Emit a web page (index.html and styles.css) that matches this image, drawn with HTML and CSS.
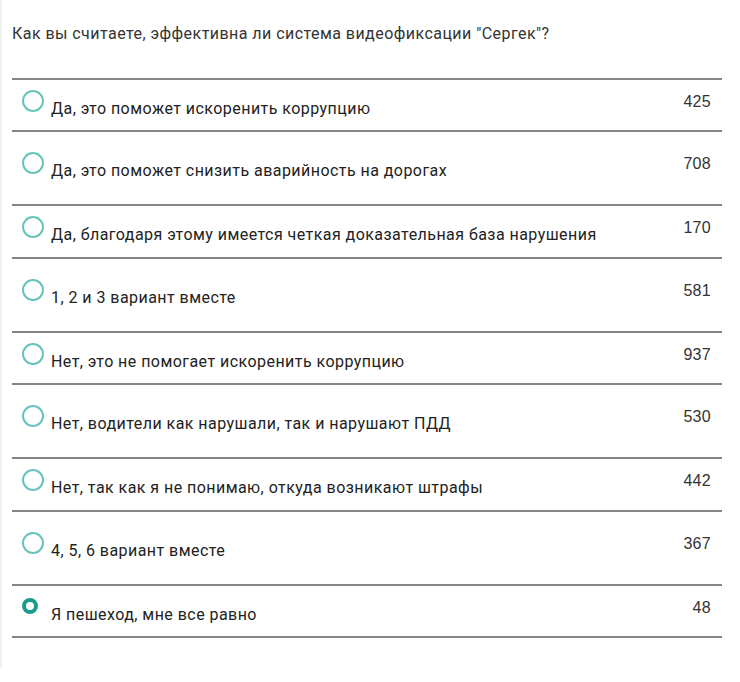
FILE: index.html
```html
<!DOCTYPE html>
<html lang="ru">
<head>
    <meta charset="UTF-8">
    <meta name="viewport" content="width=device-width, initial-scale=1.0">
    <title>Опрос</title>
    <link rel="stylesheet" href="styles.css">
</head>
<body>
    <div class="poll">
        <p class="poll-title">Как вы считаете, эффективна ли система видеофиксации "Сергек"?</p>
        <div class="poll-options">
            <div class="option">
                <span class="radio"></span>
                <span class="option-text">Да, это поможет искоренить коррупцию</span>
                <span class="count">425</span>
            </div>
            <div class="option">
                <span class="radio"></span>
                <span class="option-text">Да, это поможет снизить аварийность на дорогах</span>
                <span class="count">708</span>
            </div>
            <div class="option">
                <span class="radio"></span>
                <span class="option-text">Да, благодаря этому имеется четкая доказательная база нарушения</span>
                <span class="count">170</span>
            </div>
            <div class="option">
                <span class="radio"></span>
                <span class="option-text">1, 2 и 3 вариант вместе</span>
                <span class="count">581</span>
            </div>
            <div class="option">
                <span class="radio"></span>
                <span class="option-text">Нет, это не помогает искоренить коррупцию</span>
                <span class="count">937</span>
            </div>
            <div class="option">
                <span class="radio"></span>
                <span class="option-text">Нет, водители как нарушали, так и нарушают ПДД</span>
                <span class="count">530</span>
            </div>
            <div class="option">
                <span class="radio"></span>
                <span class="option-text">Нет, так как я не понимаю, откуда возникают штрафы</span>
                <span class="count">442</span>
            </div>
            <div class="option">
                <span class="radio"></span>
                <span class="option-text">4, 5, 6 вариант вместе</span>
                <span class="count">367</span>
            </div>
            <div class="option">
                <span class="radio checked"></span>
                <span class="option-text">Я пешеход, мне все равно</span>
                <span class="count">48</span>
            </div>
        </div>
    </div>
</body>
</html>
```

FILE: styles.css
```css
body {
    margin: 0;
    font-family: Roboto, "Noto Sans", sans-serif;
    background: #fff;
}
.poll {
    height: 668px;
    box-sizing: border-box;
    border-left: 2px solid #f0f0f0;
    padding: 25px 18px 0 10px;
}
.poll-title {
    margin: 0 0 35px 0;
    font-size: 16px;
    letter-spacing: 0.45px;
    line-height: 18px;
    color: #333;
}
.poll-options {
    border-top: 2px solid #858585;
}
.option {
    display: flex;
    align-items: flex-start;
    box-sizing: border-box;
    height: 52.4px;
    padding: 10px 0 0 10px;
    border-bottom: 2px solid #858585;
}
.option:nth-child(even) {
    height: 74px;
    padding-top: 20px;
}
.radio {
    flex: none;
    width: 22px;
    height: 22px;
    box-sizing: border-box;
    border: 2px solid #66c4b9;
    border-radius: 50%;
}
.radio.checked {
    width: 16px;
    height: 16px;
    border: 4px solid #1a9b8c;
    margin: 2px 6px 0 0;
}
.option-text {
    margin: 10px 0 0 7px;
    font-size: 16px;
    letter-spacing: 0.45px;
    line-height: 18px;
    color: #222;
}
.count {
    margin: 3px 11px 0 auto;
    font-family: "Liberation Sans", Arial, sans-serif;
    font-size: 16px;
    letter-spacing: 0.3px;
    line-height: 18px;
    color: #333;
}
```
